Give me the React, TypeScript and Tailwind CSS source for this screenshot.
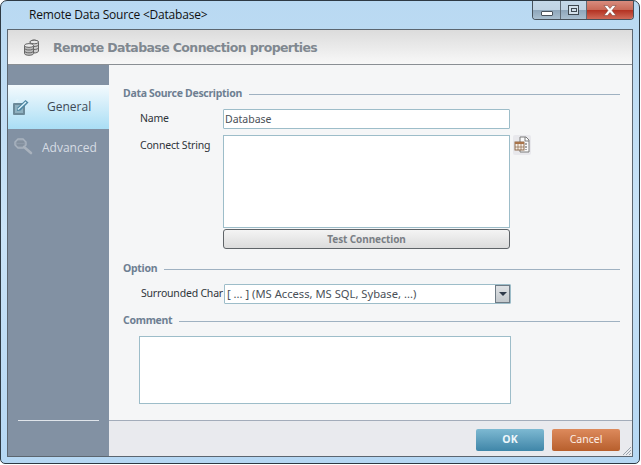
import React from "react";

function Section({ title, className }: { title: string; className: string }) {
  return (
    <div className={`flex items-center h-[14px] text-[10.5px] font-bold tracking-[-0.3px] text-[#6e7f92] font-['Noto_Sans',sans-serif] mr-[12px] ${className}`}>
      <span>{title}</span>
      <div className="ml-[7px] flex-1 h-px bg-[#9fb1c1]" />
    </div>
  );
}

function DbIcon() {
  return (
    <svg width="17" height="17" viewBox="0 0 17 17" className="shrink-0">
      <g stroke="#666" strokeWidth="1">
        <path d="M7 3c0-1 2-2 4-2s4.500 1 4.500 2v9c0 1-2 2-4.500 2z" fill="#cfcfcf" />
        <ellipse cx="11.200" cy="3" rx="4.300" ry="1.800" fill="#e6e6e6" />
        <path d="M11 7.500c2.500 0 4.500-.8 4.500-1.800M11 10.500c2.500 0 4.500-.8 4.500-1.800" fill="none" />
        <path d="M1.500 6.500v8c0 1 2 1.800 4.500 1.800s4.500-.8 4.500-1.800v-8z" fill="#bdbdbd" />
        <ellipse cx="6" cy="6.500" rx="4.500" ry="1.900" fill="#ececec" />
        <path d="M1.500 9.200c0 1 2 1.800 4.500 1.800s4.500-.8 4.500-1.800M1.500 12c0 1 2 1.800 4.500 1.800s4.500-.8 4.500-1.800" fill="none" />
      </g>
    </svg>
  );
}

function EditIcon() {
  return (
    <svg width="18" height="18" viewBox="0 0 18 18">
      <rect x="2" y="5" width="12" height="12" rx="1" fill="#6c8a99" />
      <rect x="4" y="7" width="8" height="8" fill="#8fb1c0" />
      <path d="M6 13l.5-3.500L14.500 2l3 2.500L9.500 12.500z" fill="#4d87a3" />
      <path d="M7 11.500l8-7.500" stroke="#dff4fc" strokeWidth="1.400" />
      <path d="M3 4l3-3 2 1-3 3z" fill="#e4f5fc" />
    </svg>
  );
}

function SearchIcon() {
  return (
    <svg width="20" height="18" viewBox="0 0 20 18">
      <path d="M2 5l3-3h5l3 3v3l-3 3H5L2 8z" fill="#8e9aa9" stroke="#a9b3bf" strokeWidth="1.400" />
      <path d="M4 5h7M4 8h7" stroke="#76838f" strokeWidth="0.800" />
      <path d="M11 10l7 6" stroke="#a9b2bd" strokeWidth="2.600" strokeLinecap="round" />
    </svg>
  );
}

function TableDocIcon() {
  return (
    <svg width="18" height="20" viewBox="0 0 18 20">
      <rect width="18" height="20" rx="2" fill="#e8e8ec" />
      <path d="M7 2h6l3 3v12H7z" fill="#fbfbfb" stroke="#7c7c7c" />
      <path d="M12 2v4h4" fill="none" stroke="#7c7c7c" />
      <path d="M13 8v7" stroke="#8c8c8c" strokeWidth="1.500" strokeDasharray="2 1" />
      <rect x="2" y="7" width="9" height="8" fill="#f7efe6" stroke="#8e6b4c" />
      <rect x="2" y="7" width="9" height="2" fill="#a9744a" />
      <path d="M2 12h9M5 9v6M8 9v6" stroke="#8e6b4c" strokeWidth="0.700" />
    </svg>
  );
}

export default function App() {
  return (
    <div className="w-[641px] h-[465px] overflow-hidden bg-[#fff] font-['DejaVu_Sans',sans-serif]">
      <div className="w-[640px] h-[464px] flex flex-col rounded-t-[7px] rounded-b-[5px] border border-[#2e3a44] bg-gradient-to-b from-[#b9d9f2] via-[#c9e3f7] to-[#b5d7f3] px-[6px] pb-[6px]">
        <div className="h-[28px] shrink-0 flex items-start justify-between">
          <div className="pl-[22px] pt-[6px] text-[12px] tracking-[-0.2px] leading-[16px] text-[#111] font-['Open_Sans',sans-serif]">
            Remote Data Source &lt;Database&gt;
          </div>
          <div className="flex h-[19px] w-[102px] -mr-px border border-t-0 border-[#47525c] rounded-b-[4px] overflow-hidden">
            <div className="w-[28px] bg-[linear-gradient(to_bottom,#c4d8e8_0%,#c0d3e3_50%,#8fa7bb_52%,#a9bfd0_100%)] border-r border-[#5e6b76] flex items-center justify-center">
              <div className="w-[12px] h-[5px] mt-[7px] bg-white border border-[#48525c] rounded-[1px]" />
            </div>
            <div className="w-[26px] bg-[linear-gradient(to_bottom,#c4d8e8_0%,#c0d3e3_50%,#8fa7bb_52%,#a9bfd0_100%)] border-r border-[#5e6b76] flex items-center justify-center">
              <div className="w-[11px] h-[10px] border border-[#3e4850] bg-[#d3e0ea] flex items-center justify-center">
                <div className="w-[6px] h-[4px] border border-[#3e4850]" />
              </div>
            </div>
            <div className="flex-1 bg-[linear-gradient(to_bottom,#d88c7e_0%,#c96a58_48%,#b43323_52%,#d06a58_100%)] flex items-center justify-center">
              <svg width="16" height="13" viewBox="0 0 16 13">
                <path d="M2 1.500h3.500L8 4.500l2.500-3H14L10 6.500l4 5h-3.500L8 8.500l-2.500 3H2l4-5z" fill="#fff" stroke="#6d3b33" strokeWidth="0.500" />
              </svg>
            </div>
          </div>
        </div>

        <div className="relative flex-1 min-h-0 flex flex-col border border-[#5c6670] bg-[#f5f6f7]">
          <div className="h-[35px] shrink-0 flex items-center pl-[15px] pt-[1px] border-b border-[#8a8f94] bg-gradient-to-b from-[#dcdcdc] to-[#f8f8f8]">
            <DbIcon />
            <span className="ml-[13px] pt-[2px] text-[12.500px] font-bold text-[#808890] font-['DejaVu_Sans',sans-serif] tracking-[-0.6px]">
              Remote Database Connection properties
            </span>
          </div>

          <div className="flex-1 min-h-0 flex">
            <div className="w-[101px] shrink-0 bg-[#8291a3] flex flex-col pt-[20px] pb-[35px]">
              <div className="h-[44px] flex items-center bg-gradient-to-b from-[#f4fafd] to-[#a9def5] pl-[3px]">
                <EditIcon />
                <span className="ml-[18px] text-[12px] text-[#3e4a56] font-['Open_Sans',sans-serif]">General</span>
              </div>
              <div className="h-[36px] flex items-center pl-[5px] mt-[-1px]">
                <SearchIcon />
                <span className="ml-[9px] mt-[4px] text-[12px] text-[#d6dce3] font-['Open_Sans',sans-serif]">Advanced</span>
              </div>
              <div className="mt-auto mx-[10px] h-px bg-[#dfe4ea]" />
            </div>

            <div className="flex-1 min-w-0 flex flex-col">
              <div className="flex-1 min-h-0 pl-[14px] pt-[22px] text-[10.500px] text-[#2f343a] font-['Noto_Sans',sans-serif]">
                <Section title="Data Source Description" className="" />
                <div className="mt-[8px] flex items-center h-[20px]">
                  <div className="ml-[17px] w-[83px] tracking-[-0.2px]">Name</div>
                  <div className="w-[287px] h-[20px] border border-[#9dbdc9] bg-white rounded-[1px] pl-[1px] leading-[18px] text-[#4a5058]">Database</div>
                </div>
                <div className="mt-[6px] flex items-start">
                  <div className="ml-[17px] w-[83px] pt-[3px] tracking-[-0.2px]">Connect String</div>
                  <div className="w-[287px] h-[93px] border border-[#9dbdc9] bg-white" />
                  <div className="ml-[3px]"><TableDocIcon /></div>
                </div>
                <div className="ml-[100px] mt-[1px] w-[287px] h-[20px] border border-[#5f6468] rounded-[3px] bg-gradient-to-b from-[#f4f4f4] to-[#dcdcdc] flex items-center justify-center font-bold text-[#7a7f85] text-[10px] tracking-[-0.1px]">
                  Test Connection
                </div>
                <Section title="Option" className="mt-[13px]" />
                <div className="mt-[8px] flex items-center h-[20px]">
                  <div className="ml-[18px] w-[83px] whitespace-nowrap tracking-[-0.2px]">Surrounded Char</div>
                  <div className="w-[287px] h-[20px] border border-[#9dbdc9] bg-white rounded-[1px] flex items-center pl-[2px] text-[11.200px] text-[#4a5058]">
                    <span className="flex-1">[ ... ] (MS Access, MS SQL, Sybase, ...)</span>
                    <div className="w-[15px] h-[18px] border border-[#6f7b85] bg-gradient-to-b from-[#dfe2e5] to-[#c3c8cc] flex items-center justify-center">
                      <div className="w-0 h-0 border-l-[4px] border-r-[4px] border-t-[4px] border-l-transparent border-r-transparent border-t-[#2f3a4a]" />
                    </div>
                  </div>
                </div>
                <Section title="Comment" className="mt-[10px]" />
                <div className="ml-[16px] mt-[8px] w-[372px] h-[68px] border border-[#9dbdc9] bg-white" />
              </div>
              <div className="h-[36px] shrink-0 border-t border-[#a3acba] bg-[#e9eaee] flex items-start justify-end gap-[8px] pt-[8px] pr-[12px]">
                <div className="w-[68px] h-[22px] rounded-[2px] bg-gradient-to-b from-[#7db9d2] to-[#3f86a8] flex items-center justify-center text-[#eef7fb] font-bold text-[10.500px] font-['Noto_Sans',sans-serif]">OK</div>
                <div className="w-[68px] h-[22px] rounded-[2px] bg-gradient-to-b from-[#dd8a5c] to-[#b75f2c] flex items-center justify-center text-[#fdeee4] text-[10.500px] font-['Noto_Sans',sans-serif]">Cancel</div>
              </div>
            </div>
          </div>
          <svg width="12" height="12" viewBox="0 0 12 12" className="absolute right-0 bottom-0">
            <path d="M11 3L3 11M11 6L6 11M11 9L9 11" stroke="#9aa4ad" strokeWidth="1" />
          </svg>
        </div>
      </div>
    </div>
  );
}
